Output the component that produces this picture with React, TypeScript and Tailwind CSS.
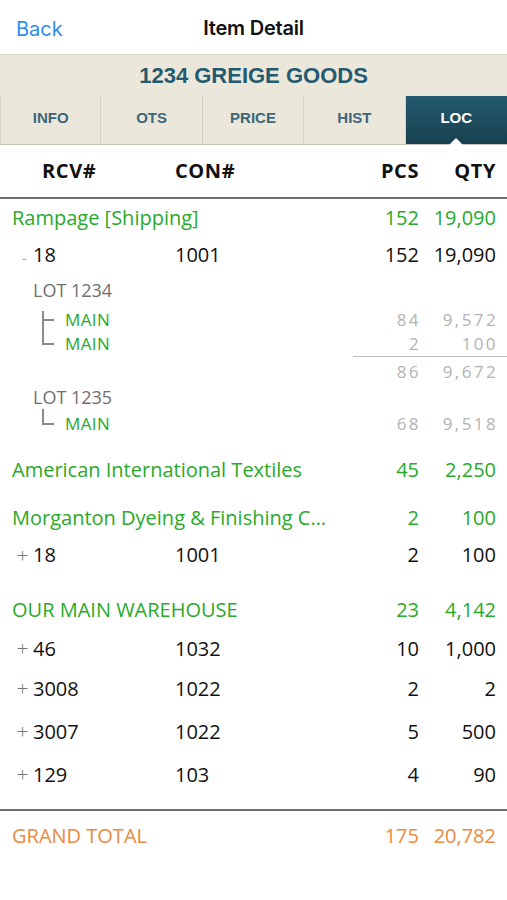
const GREEN = 'text-[#2aa92a]'
const FONT = "font-['Open_Sans','Lato',sans-serif]"

const TABS = ['INFO', 'OTS', 'PRICE', 'HIST', 'LOC']

function Row({
  h,
  className = '',
  left,
  con,
  pcs,
  qty,
  color = 'text-[#111]',
}: {
  h: string
  className?: string
  left: React.ReactNode
  con?: string
  pcs: string
  qty: string
  color?: string
}) {
  return (
    <div
      className={`grid grid-cols-[163px_1fr_66px_77px] items-center pl-3 pr-[11px] text-[20px] ${color} ${h} ${className}`}
    >
      <div className="flex items-center min-w-0 whitespace-nowrap">{left}</div>
      <div>{con}</div>
      <div className="text-right">{pcs}</div>
      <div className="text-right">{qty}</div>
    </div>
  )
}

function Rcv({ sign, num }: { sign: '+' | '-'; num: string }) {
  return (
    <>
      <span className="w-[21px] text-[#777] text-[21px] font-light text-center leading-none">
        {sign === '-' ? <span className="text-[15px] pl-1">-</span> : '+'}
      </span>
      <span>{num}</span>
    </>
  )
}

// light grey lot figures: smaller glyphs, spaced out to the reference's width
function Num({ children }: { children: string }) {
  return <div className="text-right tracking-[2.4px] -mr-[2px]">{children}</div>
}

function SubRow({
  h,
  label,
  pcs,
  qty,
  last,
  top,
}: {
  h: string
  label: string
  pcs: string
  qty: string
  last?: boolean
  top?: boolean
}) {
  return (
    <div
      className={`grid grid-cols-[163px_1fr_66px_77px] items-center pl-3 pr-[11px] text-[17px] leading-none text-[#b3b3b3] ${h}`}
    >
      <div className="flex items-center h-full">
        <span className="relative w-[42px] h-full">
          <span
            className={`absolute left-[30px] border-l-2 border-[#8a8a8a] ${
              top ? 'top-[3px]' : 'top-0'
            } ${last ? 'h-1/2' : 'bottom-0'}`}
          />
          <span className="absolute left-[30px] top-1/2 w-[12px] border-t-2 border-[#8a8a8a]" />
        </span>
        <span className={`${GREEN} text-[17px] ml-[11px] tracking-[0.4px]`}>{label}</span>
      </div>
      <div />
      <Num>{pcs}</Num>
      <Num>{qty}</Num>
    </div>
  )
}

function LotLabel({ h, text }: { h: string; text: string }) {
  return (
    <div className={`flex items-center pl-[33px] text-[18px] text-[#6f6f6f] ${h}`}>{text}</div>
  )
}

export default function App() {
  return (
    <div className={`w-[507px] h-[900px] bg-white overflow-hidden ${FONT}`}>
      {/* Nav bar */}
      <div className="relative h-[54px] flex items-center justify-center font-['Inter',sans-serif]">
        <span className="absolute left-4 top-[14px] text-[20px] text-[#2f8cf0]">Back</span>
        <span className="text-[20px] font-semibold text-[#111] tracking-[-0.2px] pt-[2px]">Item Detail</span>
      </div>

      {/* Item title */}
      <div className="bg-[#ece7db] border-t border-[#d8d3c6]">
        <div className="h-[41px] flex items-center justify-center font-['Liberation_Sans',sans-serif] font-bold text-[22px] text-[#235a6f]">
          1234 GREIGE GOODS
        </div>
        <div className="grid grid-cols-5 h-[49px] border-b border-[#c9c4b8] font-['Liberation_Sans',sans-serif] font-bold text-[15px] text-[#3d6679]">
          {TABS.map((t, i) =>
            t === 'LOC' ? (
              <div
                key={t}
                className="relative flex items-center justify-center pb-[3px] bg-gradient-to-b from-[#245a70] to-[#18414f] text-white"
              >
                {t}
                <span className="absolute bottom-[-1px] left-1/2 -translate-x-1/2 w-0 h-0 border-l-[7px] border-r-[7px] border-b-[7px] border-l-transparent border-r-transparent border-b-white" />
              </div>
            ) : (
              <div
                key={t}
                className={`flex items-center justify-center pb-[3px] border-r border-[#d6d1c4] ${i === 0 ? 'border-l' : ''}`}
              >
                {t}
              </div>
            ),
          )}
        </div>
      </div>

      {/* Column headers */}
      <div className="grid grid-cols-[163px_1fr_66px_77px] items-center h-[54px] pl-3 pr-[11px] text-[20px] font-bold tracking-[0.6px] text-[#111] border-b-2 border-[#6f6f6f]">
        <div className="pl-[30px]">RCV#</div>
        <div>CON#</div>
        <div className="text-right">PCS</div>
        <div className="text-right">QTY</div>
      </div>

      {/* Rampage */}
      <Row h="h-[38px]" color={GREEN} left="Rampage [Shipping]" pcs="152" qty="19,090" />
      <Row h="h-[36px]" left={<Rcv sign="-" num="18" />} con="1001" pcs="152" qty="19,090" />
      <LotLabel h="h-[35px]" text="LOT 1234" />
      <SubRow h="h-[22px]" label="MAIN" pcs="84" qty="9,572" top />
      <SubRow h="h-[26px]" label="MAIN" pcs="2" qty="100" last />
      <div className="ml-[353px] border-t border-[#bdbdbd]" />
      <div className="grid grid-cols-[163px_1fr_66px_77px] items-center h-[28px] pl-3 pr-[11px] text-[17px] leading-none text-[#b3b3b3]">
        <div />
        <div />
        <Num>86</Num>
        <Num>9,672</Num>
      </div>
      <LotLabel h="h-[24px]" text="LOT 1235" />
      <SubRow h="h-[28px]" label="MAIN" pcs="68" qty="9,518" last />

      {/* American */}
      <Row h="h-[40px]" className="mt-[13px]" color={GREEN} left="American International Textiles" pcs="45" qty="2,250" />

      {/* Morganton */}
      <Row h="h-[38px]" className="mt-[9px]" color={GREEN} left="Morganton Dyeing & Finishing C…" pcs="2" qty="100" />
      <Row h="h-[36px]" left={<Rcv sign="+" num="18" />} con="1001" pcs="2" qty="100" />

      {/* Our main warehouse */}
      <Row h="h-[40px]" className="mt-[17px]" color={GREEN} left="OUR MAIN WAREHOUSE" pcs="23" qty="4,142" />
      <Row h="h-[37px]" left={<Rcv sign="+" num="46" />} con="1032" pcs="10" qty="1,000" />
      <Row h="h-[43px]" left={<Rcv sign="+" num="3008" />} con="1022" pcs="2" qty="2" />
      <Row h="h-[43px]" left={<Rcv sign="+" num="3007" />} con="1022" pcs="5" qty="500" />
      <Row h="h-[43px]" left={<Rcv sign="+" num="129" />} con="103" pcs="4" qty="90" />

      {/* Grand total */}
      <div className="mt-[13px] border-t-2 border-[#6f6f6f]" />
      <Row h="h-[50px]" color="text-[#ec8a3d]" left="GRAND TOTAL" pcs="175" qty="20,782" />
    </div>
  )
}
